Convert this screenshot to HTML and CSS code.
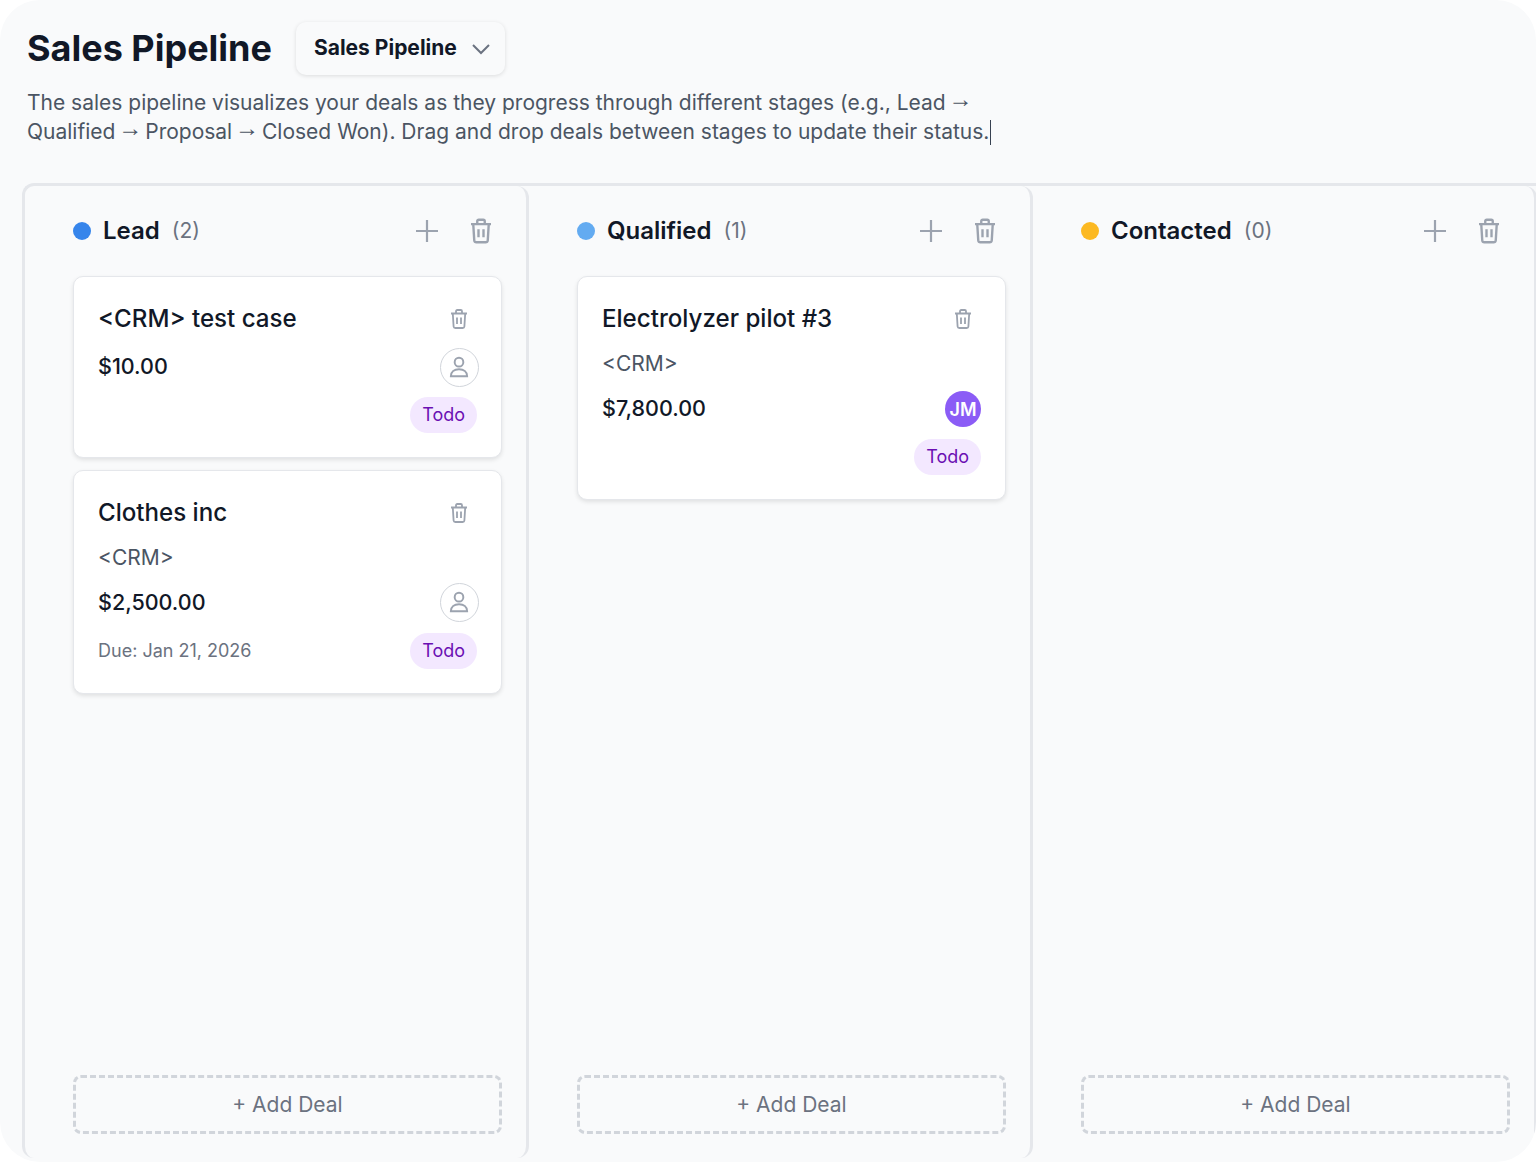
FILE: index.html
```html
<!DOCTYPE html>
<html lang="en">
<head>
  <meta charset="UTF-8" />
  <meta name="viewport" content="width=device-width, initial-scale=1.0" />
  <title>Sales Pipeline</title>
  <link rel="stylesheet" href="styles.css">
</head>

<body>
  <div class="app">
    <svg width="0" height="0" class="defs">
      <symbol id="icon-trash" viewBox="0 0 24 24">
        <path d="M4 6.5h16M9 6.5V4.2c0-.7.5-1.2 1.2-1.2h3.6c.7 0 1.2.5 1.2 1.2v2.3M5.8 6.5l.8 13c.1 1 .8 1.500 1.700 1.500h7.400c.9 0 1.600-.5 1.700-1.500l.8-13M10 10.500v6.500M14 10.500v6.500" />
      </symbol>
      <symbol id="icon-user" viewBox="0 0 24 24">
        <circle cx="12" cy="7.5" r="4" />
        <path d="M4.5 20.5c0-4.200 3.300-6.500 7.500-6.500s7.500 2.300 7.500 6.500z" />
      </symbol>
    </svg>

    <header class="page-head">
      <div class="title-row">
        <h1>Sales Pipeline</h1>
        <button class="pipeline-select">
          Sales Pipeline
          <svg viewBox="0 0 24 24" class="chevron"><path d="M4 8l8 8 8-8" /></svg>
        </button>
      </div>
      <p class="intro">The sales pipeline visualizes your deals as they progress through different stages (e.g., Lead <span class="arrow">→</span> Qualified <span class="arrow">→</span> Proposal <span class="arrow">→</span> Closed Won). Drag and drop deals between stages to update their status.<span class="caret"></span></p>
    </header>

    <div class="board">
      <!-- Lead -->
      <section class="column">
        <div class="column-head">
          <span class="dot dot-lead"></span>
          <h2>Lead</h2>
          <span class="count">(2)</span>
          <svg viewBox="0 0 24 24" class="head-icon add"><path d="M12 1v22M1 12h22" /></svg>
          <svg class="head-icon trash"><use href="#icon-trash" /></svg>
        </div>
        <div class="cards">
          <article class="card">
            <div class="card-row">
              <h3>&lt;CRM&gt; test case</h3>
              <svg class="card-trash"><use href="#icon-trash" /></svg>
            </div>
            <div class="card-row amount-row tight">
              <span class="amount">$10.00</span>
              <span class="avatar-empty"><svg><use href="#icon-user" /></svg></span>
            </div>
            <div class="card-row foot-row">
              <span class="due"></span>
              <span class="tag">Todo</span>
            </div>
          </article>
          <article class="card">
            <div class="card-row">
              <h3>Clothes inc</h3>
              <svg class="card-trash"><use href="#icon-trash" /></svg>
            </div>
            <div class="company">&lt;CRM&gt;</div>
            <div class="card-row amount-row">
              <span class="amount">$2,500.00</span>
              <span class="avatar-empty"><svg><use href="#icon-user" /></svg></span>
            </div>
            <div class="card-row foot-row">
              <span class="due">Due: Jan 21, 2026</span>
              <span class="tag">Todo</span>
            </div>
          </article>
        </div>
        <button class="add-deal">+ Add Deal</button>
      </section>

      <!-- Qualified -->
      <section class="column">
        <div class="column-head">
          <span class="dot dot-qualified"></span>
          <h2>Qualified</h2>
          <span class="count">(1)</span>
          <svg viewBox="0 0 24 24" class="head-icon add"><path d="M12 1v22M1 12h22" /></svg>
          <svg class="head-icon trash"><use href="#icon-trash" /></svg>
        </div>
        <div class="cards">
          <article class="card">
            <div class="card-row">
              <h3>Electrolyzer pilot #3</h3>
              <svg class="card-trash"><use href="#icon-trash" /></svg>
            </div>
            <div class="company">&lt;CRM&gt;</div>
            <div class="card-row amount-row">
              <span class="amount">$7,800.00</span>
              <span class="avatar">JM</span>
            </div>
            <div class="card-row foot-row">
              <span class="due"></span>
              <span class="tag">Todo</span>
            </div>
          </article>
        </div>
        <button class="add-deal">+ Add Deal</button>
      </section>

      <!-- Contacted -->
      <section class="column">
        <div class="column-head">
          <span class="dot dot-contacted"></span>
          <h2>Contacted</h2>
          <span class="count">(0)</span>
          <svg viewBox="0 0 24 24" class="head-icon add"><path d="M12 1v22M1 12h22" /></svg>
          <svg class="head-icon trash"><use href="#icon-trash" /></svg>
        </div>
        <div class="cards"></div>
        <button class="add-deal">+ Add Deal</button>
      </section>
    </div>
  </div>
</body>

</html>
```

FILE: styles.css
```css
* {
  box-sizing: border-box;
}

html,
body {
  margin: 0;
  height: 100%;
  background-color: #fff;
  overflow: hidden;
}

body {
  font-family: Inter, "Liberation Sans", sans-serif;
  color: #111827;
}

.defs {
  display: block;
  height: 0;
}

.app {
  height: 1162px;
  background-color: #f9fafb;
  border-radius: 40px;
  overflow: hidden;
  display: flex;
  flex-direction: column;
}

.page-head {
  padding: 22px 0 0 27px;
  height: 183px;
}

.title-row {
  display: flex;
  align-items: center;
  gap: 24px;
}

h1 {
  margin: 0;
  font-size: 36px;
  font-weight: 700;
  line-height: 53px;
}

.pipeline-select {
  display: flex;
  align-items: center;
  gap: 12px;
  width: 209px;
  height: 53px;
  padding: 0 12px 3px 18px;
  background-color: #f9fafb;
  border: none;
  border-radius: 10px;
  box-shadow: 0 1px 4px rgba(0, 0, 0, 0.12);
  font-family: inherit;
  font-size: 21px;
  font-weight: 650;
  color: #111827;
  white-space: nowrap;
}

.chevron {
  flex: none;
  width: 24px;
  height: 24px;
  margin-top: 3px;
  fill: none;
  stroke: #6b7280;
  stroke-width: 2;
}

.intro {
  margin: 13px 0 0;
  width: 970px;
  font-size: 21px;
  line-height: 29px;
  color: #4b5563;
}

.arrow {
  margin-left: -3px;
  font-family: "Liberation Sans", sans-serif;
  font-size: 24px;
  line-height: 0;
  letter-spacing: -3px;
  vertical-align: 3px;
}

.caret {
  display: inline-block;
  width: 1px;
  height: 25px;
  margin-left: 1px;
  vertical-align: -6px;
  background-color: #374151;
}

.board {
  display: flex;
  height: 975px;
  margin-left: 22px;
  border-top: 3px solid #e5e7eb;
  border-left: 3px solid #e5e7eb;
  border-radius: 12px 0 0 12px;
}

.column {
  flex: 0 0 504px;
  display: flex;
  flex-direction: column;
  height: 972px;
  padding: 24px 24px 24px 48px;
  border-right: 3px solid #e5e7eb;
  border-radius: 12px;
}

.column-head {
  display: flex;
  align-items: center;
  height: 42px;
  margin-bottom: 24px;
}

.dot {
  width: 18px;
  height: 18px;
  border-radius: 50%;
  margin-right: 12px;
}

.dot-lead {
  background-color: #3685eb;
}

.dot-qualified {
  background-color: #63abf1;
}

.dot-contacted {
  background-color: #fcb922;
}

h2 {
  margin: 0 0 2px;
  font-size: 24px;
  font-weight: 600;
}

.count {
  margin: 0 0 2px 12px;
  font-size: 21px;
  color: #6b7280;
}

.head-icon {
  flex: none;
  fill: none;
  stroke: #9ca3af;
  stroke-width: 2;
}

.add {
  width: 24px;
  height: 24px;
  margin-left: auto;
  margin-right: 27px;
  stroke-width: 2.200;
}

.trash {
  width: 30px;
  height: 30px;
  margin-right: 6px;
  stroke-width: 1.900;
}

.cards {
  flex: 1;
  display: flex;
  flex-direction: column;
  gap: 12px;
}

.card {
  padding: 21px 24px 24px 24px;
  background-color: #fff;
  border: 1px solid #e5e7eb;
  border-radius: 10px;
  box-shadow: 0 2px 4px rgba(0, 0, 0, 0.1);
}

.card-row {
  display: flex;
  align-items: center;
  justify-content: space-between;
}

h3 {
  margin: 0;
  font-size: 24.120px;
  font-weight: 450;
  line-height: 42px;
}

.card-trash {
  flex: none;
  width: 24px;
  height: 24px;
  margin-right: 6px;
  fill: none;
  stroke: #9ca3af;
  stroke-width: 1.800;
}

.company {
  margin-top: 9px;
  font-size: 21px;
  line-height: 30px;
  color: #4b5563;
}

.amount-row {
  min-height: 40px;
  margin-top: 9px;
}

.amount-row.tight {
  margin-top: 7px;
  margin-bottom: -1px;
}

.tight .amount {
  margin-bottom: 2px;
}

.amount {
  font-size: 21.500px;
  font-weight: 500;
}

.avatar-empty {
  display: flex;
  align-items: center;
  justify-content: center;
  width: 39px;
  height: 39px;
  margin-right: -1.500px;
  border: 1.500px solid #d1d5db;
  border-radius: 50%;
}

.avatar-empty svg {
  width: 26px;
  height: 26px;
  fill: none;
  stroke: #9ca3af;
  stroke-width: 1.800;
}

.avatar {
  display: flex;
  align-items: center;
  justify-content: center;
  width: 36px;
  height: 36px;
  margin-top: 2px;
  border-radius: 50%;
  background-color: #8b5cf6;
  color: #fff;
  font-size: 18px;
  font-weight: 600;
}

.foot-row {
  margin-top: 11px;
}

.due {
  margin-bottom: 2px;
  font-size: 18px;
  color: #6b7280;
}

.tag {
  padding: 4px 12px;
  background-color: #f3e8ff;
  border-radius: 18px;
  color: #6b0fb3;
  font-size: 18px;
  line-height: 28px;
}

.add-deal {
  flex: none;
  height: 59px;
  padding-top: 1px;
  background: none;
  border: 3px dashed #d1d5db;
  border-radius: 8px;
  font-family: inherit;
  font-size: 21px;
  color: #6b7280;
}
```
